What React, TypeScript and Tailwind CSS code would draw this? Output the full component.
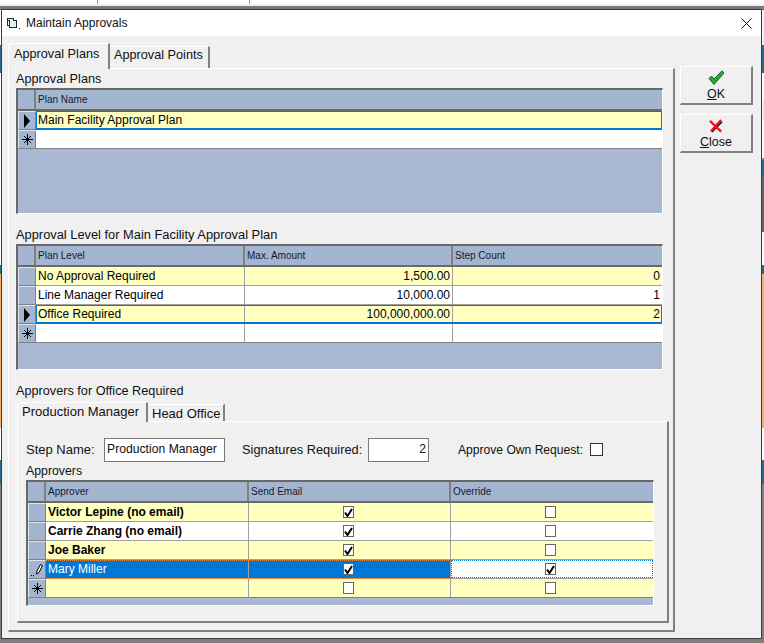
const yellow = "bg-[#ffffc0]";

const Arrow = () => (
  <svg width="8" height="14" viewBox="0 0 8 14"><polygon points="1,0 7,7 1,14" fill="#000" /></svg>
);

const Star = () => (
  <svg width="11" height="11" viewBox="0 0 11 11" stroke="#000" strokeWidth="1" shapeRendering="crispEdges">
    <path d="M5.5 0V11M0 5.5H11M2 2L9 9M9 2L2 9" />
  </svg>
);

const Pencil = () => (
  <svg width="14" height="14" viewBox="0 0 14 14" fill="none" stroke="#000" strokeWidth="1">
    <path d="M6.5 11L7 8L10.5 1.5L12.5 2.5L9 9.5Z" fill="#fff" />
    <path d="M1 12.5H2M3 12.5H4" />
  </svg>
);

const Check = ({ checked, className = "" }: { checked?: boolean; className?: string }) => (
  <div className={`w-[11px] h-[12px] border border-[#666] bg-white flex items-center justify-center ${className}`}>
    {checked && (
      <svg width="9" height="9" viewBox="0 0 9 9">
        <path d="M1 4.5L3.5 8L8 1" fill="none" stroke="#000" strokeWidth="2" />
      </svg>
    )}
  </div>
);

type Row = { bg: string; mark?: "arrow" | "star" | "pencil"; cells: React.ReactNode[]; sel?: boolean };

function Selector({ mark, h = "h-[19px]", w = "w-[18px]" }: { mark?: string; h?: string; w?: string }) {
  return (
    <div className={`${w} ${h} shrink-0 bg-[#a4b5cf] border-l border-t border-l-[#dfe5ee] border-t-[#dfe5ee] border-r border-b border-r-[#808080] border-b-[#808080] flex items-center justify-center`}>
      {mark === "arrow" && <Arrow />}
      {mark === "star" && <Star />}
      {mark === "pencil" && <Pencil />}
    </div>
  );
}

function Grid({ box, sw, heads, widths, rows }: { box: string; sw: string; heads: string[]; widths: string[]; rows: Row[] }) {
  return (
    <div className={`absolute ${box} border-t-2 border-l-2 border-t-[#696969] border-l-[#696969] border-r border-b border-r-white border-b-white bg-[#a9b9d3]`}>
      <div className="flex h-[21px] border-b-2 border-b-[#696969] bg-[#a4b5cf]">
        <div className={`${sw} shrink-0 border-r-2 border-r-[#808080]`} />
        {heads.map((h, i) => (
          <div key={h} className={`${widths[i]} shrink-0 pl-[2px] text-[10px] leading-[20px] text-[#111a33] ${i < heads.length - 1 ? "border-r-2 border-r-[#808080]" : ""}`}>
            {h}
          </div>
        ))}
      </div>
      {rows.map((r, ri) => (
        <div key={ri} className="flex relative">
          <Selector mark={r.mark} w={sw} />
          {r.cells.map((c, i) => (
            <div key={i} className={`${widths[i]} ${r.bg} shrink-0 h-[19px] pl-[2px] pr-[2px] text-[12px] leading-[19px] text-black border-b ${ri === rows.length - 1 ? "border-b-[#808080]" : "border-b-[#a0a0a0]"} ${i < r.cells.length - 1 ? "border-r border-r-[#a0a0a0]" : ""}`}>
              {c}
            </div>
          ))}
          {r.sel && <div className="absolute left-[18px] right-0 top-0 h-[19px] border border-[#0078d7] border-b-2 pointer-events-none" />}
        </div>
      ))}
    </div>
  );
}

const Txt = ({ pos, children }: { pos: string; children: React.ReactNode }) => (
  <div className={`absolute ${pos} text-[12.7px] leading-[16px] whitespace-nowrap text-[#111]`}>{children}</div>
);

const Num = ({ v }: { v: string }) => <div className="text-right">{v}</div>;
const Ctr = ({ checked }: { checked?: boolean }) => (
  <div className="flex justify-center pt-[3px] pr-[3px]"><Check checked={checked} /></div>
);
const Bold = ({ v }: { v: string }) => <div className="font-bold">{v}</div>;

function Btn({ top, icon, label }: { top: string; icon: React.ReactNode; label: React.ReactNode }) {
  return (
    <div className={`absolute left-[680px] ${top} w-[73px] h-[39px] bg-[#f0f0f0] border-t border-l border-t-white border-l-white border-r-2 border-b-2 border-r-[#808080] border-b-[#808080] flex flex-col items-center text-[12.5px] leading-[15px] text-[#111]`}>
      <div className="h-[20px] flex items-center pt-[1px]">{icon}</div>
      <div>{label}</div>
    </div>
  );
}

export default function App() {
  return (
    <div className="relative w-[764px] h-[643px] overflow-hidden bg-white [font-family:Liberation_Sans,Arial,sans-serif]">
      {/* stuff behind the dialog */}
      <div className="absolute left-[97px] top-0 w-px h-[4px] bg-[#9a8f9f]" />
      <div className="absolute left-[249px] top-0 w-px h-[4px] bg-[#9a8f9f]" />
      <div className="absolute left-0 top-[4px] w-full h-[2px] bg-[#f0f0f0]" />
      <div className="absolute left-0 top-[6px] w-full h-[4px] bg-[#7a7a7a]" />
      <div className="absolute left-[762px] top-[10px] w-[2px] h-[35px] bg-[#f0f2f5]" />
      <div className="absolute left-[762px] top-[45px] w-[2px] h-[28px] bg-[#2b6a88]" />
      <div className="absolute left-[762px] top-[98px] w-[2px] h-[22px] bg-[#efefef]" />
      <div className="absolute left-[762px] top-[158px] w-[2px] h-[2px] bg-[#888]" />
      <div className="absolute left-[762px] top-[160px] w-[2px] h-[17px] bg-[#2b6a88]" />
      <div className="absolute left-[762px] top-[177px] w-[2px] h-[55px] bg-[#666]" />
      <div className="absolute left-[762px] top-[265px] w-[2px] h-[9px] bg-[#2b6a88]" />
      <div className="absolute left-[762px] top-[274px] w-[2px] h-[154px] bg-[#f5b172]" />
      <div className="absolute left-[762px] top-[460px] w-[2px] h-[24px] bg-[#2b6a88]" />
      <div className="absolute left-[762px] top-[484px] w-[2px] h-[159px] bg-[#808080]" />
      <div className="absolute left-0 top-[45px] w-px h-[28px] bg-[#2b6a88]" />
      <div className="absolute left-0 top-[265px] w-px h-[9px] bg-[#2b6a88]" />
      <div className="absolute left-0 top-[274px] w-px h-[154px] bg-[#f5b172]" />
      <div className="absolute left-0 top-[460px] w-px h-[24px] bg-[#2b6a88]" />
      <div className="absolute left-0 top-[484px] w-px h-[159px] bg-[#808080]" />
      <div className="absolute left-0 top-[638px] w-full h-[5px] bg-[#808080]" />

      {/* dialog */}
      <div className="absolute left-[1px] top-[9px] w-[761px] h-[630px] border border-[#3c3c3c] bg-[#f0f0f0]">
        <div className="h-[26px] bg-white" />
      </div>
      <svg className="absolute left-[7px] top-[17px]" width="13" height="13" viewBox="0 0 13 13" fill="none" stroke="#1a2a2a" strokeWidth="1" shapeRendering="crispEdges">
        <path d="M0.5 1.5H6.5V3.5H9.5V10.5H2.5V3.5H0.5Z" fill="#dff0f0" />
        <path d="M0.5 1.5V8.5H2.5M11.5 11.5H12.5" />
      </svg>
      <div className="absolute left-[26px] top-[15px] text-[12px] leading-[16px] whitespace-nowrap text-[#111]">Maintain Approvals</div>
      <svg className="absolute left-[741px] top-[18px]" width="11" height="11" viewBox="0 0 11 11" stroke="#111" strokeWidth="1">
        <path d="M0.5 0.5L10.5 10.5M10.5 0.5L0.5 10.5" />
      </svg>

      {/* outer tab page */}
      <div className="absolute left-[8px] top-[68px] w-[667px] h-[564px] border-t border-l border-t-white border-l-white border-r-2 border-b-2 border-r-[#808080] border-b-[#808080]" />
      <div className="absolute left-[8px] top-[43px] w-[102px] h-[26px] bg-[#f0f0f0] rounded-tl-[4px] border-t border-l border-t-white border-l-white border-r-2 border-r-[#808080] pl-[5px] pt-[2px] text-[12.7px] leading-[16px] whitespace-nowrap text-[#111]">
        Approval Plans
      </div>
      <div className="absolute left-[110px] top-[46px] w-[100px] h-[22px] bg-[#f0f0f0] border-t border-t-white border-r-2 border-r-[#808080] pl-[4px] pt-[0px] text-[12.7px] leading-[16px] whitespace-nowrap text-[#111]">
        Approval Points
      </div>

      <Txt pos="left-[16px] top-[71px]">Approval Plans</Txt>
      <Grid
        box="left-[16px] top-[88px] w-[647px] h-[126px]"
        sw="w-[18px]"
        heads={["Plan Name"]}
        widths={["w-[626px]"]}
        rows={[
          { bg: yellow, mark: "arrow", cells: ["Main Facility Approval Plan"], sel: true },
          { bg: "bg-white", mark: "star", cells: [""] },
        ]}
      />

      <Txt pos="left-[16px] top-[227px]"><span className="text-[12.85px]">Approval Level for Main Facility Approval Plan</span></Txt>
      <Grid
        box="left-[16px] top-[244px] w-[647px] h-[126px]"
        sw="w-[18px]"
        heads={["Plan Level", "Max. Amount", "Step Count"]}
        widths={["w-[209px]", "w-[208px]", "w-[209px]"]}
        rows={[
          { bg: yellow, cells: ["No Approval Required", <Num v="1,500.00" />, <Num v="0" />] },
          { bg: "bg-white", cells: ["Line Manager Required", <Num v="10,000.00" />, <Num v="1" />] },
          { bg: yellow, mark: "arrow", cells: ["Office Required", <Num v="100,000,000.00" />, <Num v="2" />], sel: true },
          { bg: "bg-white", mark: "star", cells: ["", "", ""] },
        ]}
      />

      <Txt pos="left-[16px] top-[383px]">Approvers for Office Required</Txt>

      {/* inner tab page */}
      <div className="absolute left-[17px] top-[421px] w-[652px] h-[202px] border-t border-l border-t-white border-l-white border-r-2 border-b-2 border-r-[#808080] border-b-[#808080]" />
      <div className="absolute left-[17px] top-[402px] w-[131px] h-[20px] bg-[#f0f0f0] rounded-tl-[4px] border-t border-l border-t-white border-l-white border-r-2 border-r-[#808080] pl-[4px] pt-[1px] text-[13px] leading-[16px] whitespace-nowrap text-[#111]">
        Production Manager
      </div>
      <div className="absolute left-[148px] top-[404px] w-[77px] h-[17px] bg-[#f0f0f0] border-t border-t-white border-r-2 border-r-[#808080] pl-[4px] pt-[1px] text-[13px] leading-[16px] whitespace-nowrap text-[#111]">
        Head Office
      </div>

      <Txt pos="left-[26px] top-[442px]"><span className="text-[13px]">Step Name:</span></Txt>
      <div className="absolute left-[104px] top-[438px] w-[121px] h-[24px] bg-white border border-[#7a7a7a] pl-[2px] pt-[2px] text-[12.2px] leading-[16px] text-[#111] whitespace-nowrap">
        Production Manager
      </div>
      <Txt pos="left-[242px] top-[442px]"><span className="text-[12.8px]">Signatures Required:</span></Txt>
      <div className="absolute left-[368px] top-[438px] w-[61px] h-[24px] bg-white border border-[#7a7a7a] pr-[2px] pt-[2px] text-right text-[12px] leading-[16px] text-[#111]">
        2
      </div>
      <Txt pos="left-[458px] top-[442px]">
        <span className="text-[12.1px]">Approve Own Request:</span>
      </Txt>
      <Check className="absolute left-[590px] top-[443px] !w-[13px] !h-[13px] !border-[#333]" />
      <Txt pos="left-[26px] top-[463px]"><span className="text-[12.3px]">Approvers</span></Txt>

      <Grid
        box="left-[26px] top-[480px] w-[628px] h-[126px]"
        sw="w-[18px]"
        heads={["Approver", "Send Email", "Override"]}
        widths={["w-[203px]", "w-[202px]", "w-[202px]"]}
        rows={[
          { bg: yellow, cells: [<Bold v="Victor Lepine (no email)" />, <Ctr checked />, <Ctr />] },
          { bg: "bg-white", cells: [<Bold v="Carrie Zhang (no email)" />, <Ctr checked />, <Ctr />] },
          { bg: yellow, cells: [<Bold v="Joe Baker" />, <Ctr checked />, <Ctr />] },
          { bg: "bg-[#0078d7]", mark: "pencil", cells: [<span className="text-white">Mary Miller</span>, <Ctr checked />, ""] },
          { bg: yellow, mark: "star", cells: ["", <Ctr />, <Ctr />] },
        ]}
      />
      {/* current row: override cell is the active one */}
      <div className="absolute left-[451px] top-[560px] w-[202px] h-[18px] bg-white border border-dotted border-[#0078d7] flex justify-center pt-[2px] pr-[4px]">
        <Check checked />
      </div>
      <div className="absolute left-[46px] top-[560px] w-[405px] h-[19px] border-y border-dotted border-[#e8873a] pointer-events-none" />

      <Btn
        top="top-[66px]"
        icon={
          <svg width="17" height="16" viewBox="0 0 17 16">
            <path d="M1 8.5L3.5 6L6 9L14 0.8L16 3L6 14.5Z" fill="#2fa836" stroke="#14622a" strokeWidth="1" />
          </svg>
        }
        label={<><span className="underline">O</span>K</>}
      />
      <Btn
        top="top-[114px]"
        icon={
          <svg width="14" height="14" viewBox="0 0 15 15">
            <path d="M3 14L14 3" stroke="#000" strokeWidth="1.5" />
            <path d="M1 2L13 13.5M13 1L2 13" stroke="#ee1122" strokeWidth="2.4" />
          </svg>
        }
        label={<><span className="underline">C</span>lose</>}
      />
    </div>
  );
}
